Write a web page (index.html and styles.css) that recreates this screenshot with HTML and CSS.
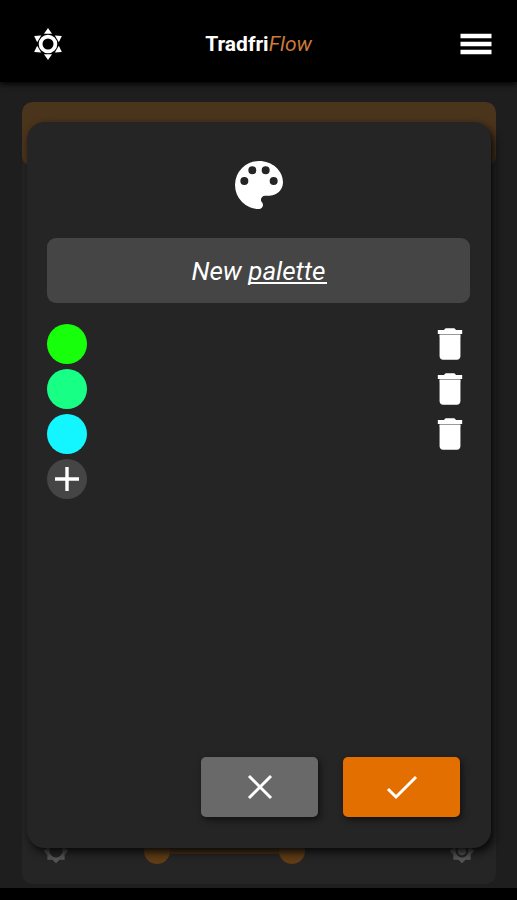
FILE: index.html
```html
<!DOCTYPE html>
<html lang="en">
<head>
<meta charset="utf-8">
<meta name="viewport" content="width=device-width, initial-scale=1">
<title>TradfriFlow</title>
<link rel="stylesheet" href="styles.css">
</head>
<body>
<svg width="0" height="0" class="defs" aria-hidden="true">
  <symbol id="lamp" viewBox="-16 -16 32 32">
    <circle r="7.4" fill="none" stroke="currentColor" stroke-width="3.8"/>
    <g fill="currentColor">
      <path id="ray" d="M0-16 4-10.2H-4Z"/>
      <use href="#ray" transform="rotate(60)"/>
      <use href="#ray" transform="rotate(120)"/>
      <use href="#ray" transform="rotate(180)"/>
      <use href="#ray" transform="rotate(240)"/>
      <use href="#ray" transform="rotate(300)"/>
    </g>
  </symbol>
  <symbol id="trash" viewBox="0.5 0.5 23 23">
    <path fill="#999" d="M6 5.500h12V8H6z"/>
    <path fill="currentColor" d="M6 19c0 1.100.9 2 2 2h8c1.100 0 2-.9 2-2V6.800H6zM19 4h-3.500l-1-1h-5l-1 1H5v2.200h14z"/>
  </symbol>
</svg>

<header class="topbar">
  <button class="icon-button" aria-label="Lights"><svg class="icon-lamp"><use href="#lamp"/></svg></button>
  <h1 class="brand"><strong>Tradfri</strong><em>Flow</em></h1>
  <button class="icon-button menu" aria-label="Menu">
    <svg class="icon-menu" viewBox="0 0 32 22"><path stroke="currentColor" stroke-width="4.600" d="M.5 3h31M.5 11h31M.5 19h31"/></svg>
  </button>
</header>

<main class="stage">
  <section class="room">
    <div class="room-head"></div>
    <div class="room-levels">
      <svg class="level-icon" viewBox="0 0 24 24"><path d="M20 15.310 23.310 12 20 8.690V4h-4.690L12 .69 8.690 4H4v4.690L.69 12 4 15.310V20h4.690L12 23.310 15.310 20H20zM12 18a6 6 0 1 1 0-12 6 6 0 0 1 0 12z"/></svg>
      <div class="range">
        <input type="range" aria-label="Lowest brightness" value="19">
        <input type="range" aria-label="Highest brightness" value="60">
      </div>
      <svg class="level-icon" viewBox="0 0 24 24"><path d="M20 15.310 23.310 12 20 8.690V4h-4.690L12 .69 8.690 4H4v4.690L.69 12 4 15.310V20h4.690L12 23.310 15.310 20H20zM12 18a6 6 0 1 1 0-12 6 6 0 0 1 0 12z"/><circle cx="12" cy="12" r="4"/></svg>
    </div>
  </section>

  <form class="dialog" role="dialog" aria-label="Palette editor">
    <svg class="icon-palette" viewBox="0 0 24 24"><path fill="currentColor" d="M12 3a9 9 0 0 0 0 18c.83 0 1.500-.67 1.500-1.500 0-.39-.15-.74-.39-1.010-.23-.26-.38-.61-.38-.99 0-.83.670-1.500 1.500-1.500H16c2.760 0 5-2.240 5-5 0-4.420-4.030-8-9-8zm-5.500 9a1.500 1.500 0 1 1 0-3 1.500 1.500 0 0 1 0 3zm3-4a1.500 1.500 0 1 1 0-3 1.500 1.500 0 0 1 0 3zm5 0a1.500 1.500 0 1 1 0-3 1.500 1.500 0 0 1 0 3zm3 4a1.500 1.500 0 1 1 0-3 1.500 1.500 0 0 1 0 3z"/></svg>
    <input class="name" type="text" aria-label="Palette name" value="New palette">
    <ul class="colors">
      <li><button type="button" class="swatch green" aria-label="Edit green"></button><button type="button" class="remove" aria-label="Delete green"><svg><use href="#trash"/></svg></button></li>
      <li><button type="button" class="swatch mint" aria-label="Edit mint"></button><button type="button" class="remove" aria-label="Delete mint"><svg><use href="#trash"/></svg></button></li>
      <li><button type="button" class="swatch cyan" aria-label="Edit cyan"></button><button type="button" class="remove" aria-label="Delete cyan"><svg><use href="#trash"/></svg></button></li>
      <li><button type="button" class="swatch add" aria-label="Add color"><svg viewBox="0 0 40 40"><path stroke="currentColor" stroke-width="3.400" d="M8 20h24M20 8v24"/></svg></button></li>
    </ul>
    <div class="actions">
      <button type="button" class="action" aria-label="Cancel"><svg viewBox="0 0 32 32"><path d="M5 5l22 22M27 5L5 27"/></svg></button>
      <button type="button" class="action confirm" aria-label="Save"><svg viewBox="0 0 32 32"><path d="M2 18l8 8L30 6"/></svg></button>
    </div>
  </form>
</main>
<footer class="system-bar"></footer>
</body>
</html>
```

FILE: styles.css
```css
* { box-sizing: border-box; }

body {
  margin: 0;
  min-height: 100vh;
  display: flex;
  flex-direction: column;
  background: #1e1e1e;
  color: #fff;
  font-family: Roboto, "Liberation Sans", sans-serif;
}

button {
  display: flex;
  align-items: center;
  justify-content: center;
  margin: 0;
  padding: 0;
  border: 0;
  background: none;
  color: inherit;
  cursor: pointer;
}

.defs { position: absolute; }

.topbar {
  display: flex;
  align-items: center;
  justify-content: space-between;
  height: 82px;
  padding: 6px 25px 0;
  background: #000;
  box-shadow: 0 2px 6px #000;
}

.icon-button {
  width: 46px;
  height: 40px;
}
.menu { justify-content: flex-end; }
.icon-lamp { width: 32px; height: 32px; }
.icon-menu { width: 32px; height: 22px; }

.brand {
  margin: 0;
  font-size: 21px;
  font-weight: 400;
  line-height: 24px;
}
.brand strong { font-weight: 700; }
.brand em { color: #cb7a3c; }

.stage {
  position: relative;
  flex: 1;
  display: flex;
  padding: 20px 21px 4px 22px;
}

.room {
  flex: 1;
  display: flex;
  flex-direction: column;
  justify-content: space-between;
  overflow: hidden;
  border-radius: 10px;
  background: #252525;
}
.room-head {
  height: 64px;
  border-radius: 10px;
  background: #4b341c;
}
.room-levels {
  display: flex;
  align-items: center;
  gap: 13px;
  padding: 0 21px 20px;
}
.level-icon {
  width: 26px;
  height: 26px;
  fill: #555;
}

.range {
  flex: 1;
  display: grid;
  background: linear-gradient(90deg, transparent 22%, #4b3214 22% 58%, transparent 58%) center / 100% 6px no-repeat;
}
.range input {
  grid-area: 1 / 1;
  width: 100%;
  height: 26px;
  margin: 0;
  appearance: none;
  background: none;
}
.range input::-webkit-slider-thumb {
  appearance: none;
  width: 26px;
  height: 26px;
  border-radius: 50%;
  background: #5f3c15;
}

.dialog {
  position: absolute;
  inset: 40px 26px 40px 27px;
  display: flex;
  flex-direction: column;
  padding: 31px 21px 31px 20px;
  border-radius: 18px;
  background: #252525;
  box-shadow: 3px 4px 8px #080808;
}
.icon-palette {
  align-self: center;
  width: 64px;
  height: 64px;
}

/* The underline marks the word that is still being composed. */
.name {
  width: 100%;
  height: 65px;
  margin: 21px 0;
  padding: 0 16px;
  border: 0;
  border-radius: 9px;
  outline: 0;
  background: linear-gradient(#fff, #fff) calc(50% + 29px) 44px / 78px 2px no-repeat #454545;
  color: #fff;
  font: italic 26px/32px Roboto, "Liberation Sans", sans-serif;
  text-align: center;
}

.colors {
  flex: 1;
  display: flex;
  flex-direction: column;
  gap: 5px;
  margin: 0;
  padding: 0;
  list-style: none;
}
.colors li {
  display: flex;
  justify-content: space-between;
}
.swatch,
.remove,
.swatch svg,
.remove svg {
  width: 40px;
  height: 40px;
}
.swatch { border-radius: 50%; }
.green { background: #18ff0c; }
.mint { background: #18ff86; }
.cyan { background: #14f6ff; }
.add { background: #454545; }

.actions {
  display: flex;
  justify-content: flex-end;
  gap: 25px;
  padding-right: 10px;
}
.action {
  width: 117px;
  height: 60px;
  border-radius: 5px;
  background: #696969;
  box-shadow: 2px 3px 6px #111;
}
.action svg {
  width: 32px;
  height: 32px;
  fill: none;
  stroke: currentColor;
  stroke-width: 3;
}
.confirm { background: #e36f00; }

.system-bar {
  height: 12px;
  background: #000;
}
```
